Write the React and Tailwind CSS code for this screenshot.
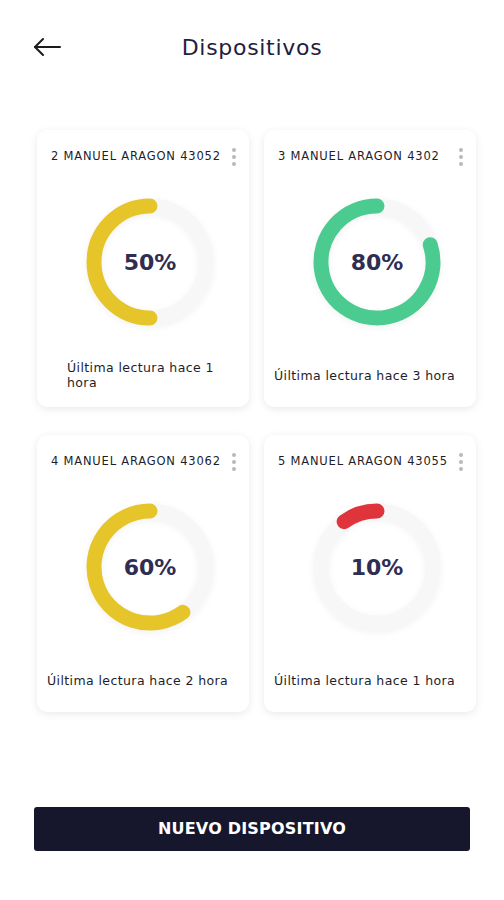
import React from 'react';

const devices = [
  { name: '2 MANUEL ARAGON 43052', pct: 50, color: '#e6c52b', note: 'Úiltima lectura hace 1 hora', narrow: true },
  { name: '3 MANUEL ARAGON 4302', pct: 80, color: '#4ccb91', note: 'Úiltima lectura hace 3 hora' },
  { name: '4 MANUEL ARAGON 43062', pct: 60, color: '#e6c52b', note: 'Úiltima lectura hace 2 hora' },
  { name: '5 MANUEL ARAGON 43055', pct: 10, color: '#e0343c', note: 'Úiltima lectura hace 1 hora' },
];

// arc drawn counter-clockwise from 12 o'clock
const arcPath = (pct, cx, cy, r) => {
  const a = (pct / 100) * Math.PI * 2;
  const x = cx - r * Math.sin(a);
  const y = cy - r * Math.cos(a);
  const large = pct > 50 ? 1 : 0;
  return `M ${cx} ${cy - r} A ${r} ${r} 0 ${large} 0 ${x.toFixed(2)} ${y.toFixed(2)}`;
};

const Ring = ({ pct, color }) => (
  <div className="relative w-[128px] h-[128px]">
    <svg width="128" height="128" viewBox="0 0 128 128" className="drop-shadow-[0_2px_3px_rgba(0,0,0,0.05)]">
      <circle cx="64" cy="64" r="56" fill="none" stroke="#f7f7f8" strokeWidth="15" />
      <path d={arcPath(pct, 64, 64, 56)} fill="none" stroke={color} strokeWidth="15" strokeLinecap="round" />
    </svg>
    <div className="absolute inset-0 flex items-center justify-center text-[22px] font-bold text-[#2f2e52]">
      {pct}%
    </div>
  </div>
);

const DeviceCard = ({ d }) => (
  <div className="bg-white rounded-[10px] shadow-[0_2px_8px_rgba(0,0,0,0.09)] h-[277px] flex flex-col">
    <div className="h-[54px] flex items-center justify-between pl-[14px] pr-[12px]">
      <span className="text-[11.5px] text-[#1d1d2b] tracking-[0.8px] whitespace-nowrap">{d.name}</span>
      <div className="flex flex-col gap-[3px] items-center w-[6px]">
        <span className="w-[4px] h-[4px] rounded-full bg-[#b9b9bd]" />
        <span className="w-[4px] h-[4px] rounded-full bg-[#b9b9bd]" />
        <span className="w-[4px] h-[4px] rounded-full bg-[#b9b9bd]" />
      </div>
    </div>
    <div className="mt-[14px] flex justify-center pl-[14px]">
      <Ring pct={d.pct} color={d.color} />
    </div>
    <div className={`mt-[18px] h-[62px] flex items-center text-[12.5px] leading-[15px] tracking-[0.4px] text-[#1d1d2b] ${d.narrow ? 'pl-[30px] pr-[18px]' : 'px-[10px]'}`}>
      {d.note}
    </div>
  </div>
);

export default function App() {
  return (
    <div className="w-[504px] h-[900px] bg-white font-['DejaVu_Sans',sans-serif] relative">
      <div className="h-[95px] flex items-center relative">
        <svg className="absolute left-[33px] top-[37px]" width="28" height="20" viewBox="0 0 28 20" fill="none" stroke="#1b1b1f" strokeWidth="2" strokeLinecap="round" strokeLinejoin="round">
          <path d="M27 10H2" />
          <path d="M10 2L2 10L10 18" />
        </svg>
        <h1 className="w-full text-center text-[22px] tracking-[0.7px] text-[#1f2040] -mt-[1px]">Dispositivos</h1>
      </div>
      <div className="grid grid-cols-2 gap-x-[15px] gap-y-[28px] pl-[37px] pr-[28px] mt-[35px]">
        {devices.map((d) => (
          <DeviceCard key={d.name} d={d} />
        ))}
      </div>
      <div className="px-[34px] mt-[95px]">
        <button className="w-full h-[44px] bg-[#16172d] rounded-[3px] text-white font-bold text-[16px] tracking-[0.2px]">
          NUEVO DISPOSITIVO
        </button>
      </div>
    </div>
  );
}
